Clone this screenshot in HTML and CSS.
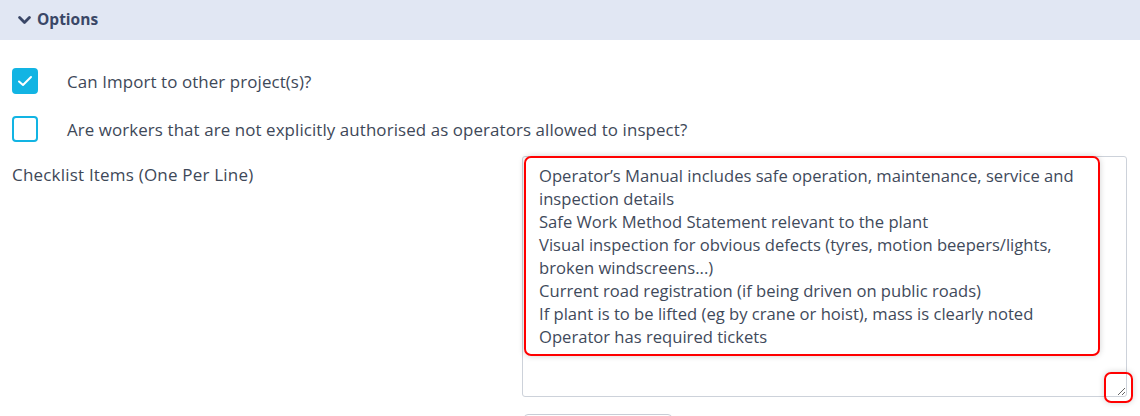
FILE: index.html
```html
<!DOCTYPE html>
<html lang="en">
<head>
    <meta charset="UTF-8">
    <title>Options</title>
    <link rel="stylesheet" href="styles.css">
</head>
<body>
    <div class="panel-header">
        <svg class="chevron" width="13" height="9" viewBox="0 0 13 9"><path d="M1.6 1.6 L6.5 6.5 L11.4 1.6" fill="none" stroke="#3a4767" stroke-width="2.8" stroke-linecap="round" stroke-linejoin="round"/></svg>
        <span>Options</span>
    </div>
    <div class="panel-body">
        <label class="check-row">
            <span class="box checked">
                <svg width="16" height="12" viewBox="0 0 16 12"><path d="M2 6.5 L6 10 L14 2" fill="none" stroke="#fff" stroke-width="2" stroke-linecap="round" stroke-linejoin="round"/></svg>
            </span>
            <span class="check-text">Can Import to other project(s)?</span>
        </label>
        <label class="check-row">
            <span class="box"></span>
            <span class="check-text">Are workers that are not explicitly authorised as operators allowed to inspect?</span>
        </label>
        <div class="field-row">
            <div class="field-label">Checklist Items (One Per Line)</div>
            <div class="field-input">
                <textarea class="checklist" rows="10">Operator’s Manual includes safe operation, maintenance, service and inspection details
Safe Work Method Statement relevant to the plant
Visual inspection for obvious defects (tyres, motion beepers/lights, broken windscreens...)
Current road registration (if being driven on public roads)
If plant is to be lifted (eg by crane or hoist), mass is clearly noted
Operator has required tickets</textarea>
                <div class="mark mark-text"></div>
                <div class="mark mark-handle"></div>
                <div class="next-btn"></div>
            </div>
        </div>
    </div>
</body>
</html>
```
FILE: styles.css
```css
html {
    overflow: hidden;
}
body {
    margin: 0;
    background: #fff;
    font-family: "Open Sans", sans-serif;
    color: #3e4858;
}
.panel-header {
    height: 40px;
    background: #e1e7f3;
    display: flex;
    align-items: center;
    padding-left: 18px;
    gap: 6px;
    color: #3a4767;
    font-weight: 700;
    font-size: 15.5px;
}
.panel-header span {
    margin-top: -2px;
}
.panel-body {
    padding: 28px 12px 0 12px;
}
.check-row {
    display: flex;
    align-items: center;
    height: 26px;
    margin-bottom: 22px;
}
.box {
    width: 26px;
    height: 26px;
    box-sizing: border-box;
    border: 2px solid #12b4e3;
    border-radius: 4px;
    display: flex;
    align-items: center;
    justify-content: center;
    flex-shrink: 0;
}
.box.checked {
    background: #12b4e3;
}
.check-text {
    margin-left: 29px;
    font-size: 16.9px;
    font-weight: 500;
    letter-spacing: 0.1px;
}
.field-row {
    display: flex;
    margin-top: -8px;
}
.field-label {
    width: 510px;
    flex-shrink: 0;
    font-size: 17px;
    font-weight: 500;
    letter-spacing: 0.2px;
    padding-top: 7px;
}
.field-input {
    position: relative;
    width: 605px;
}
.checklist {
    display: block;
    width: 605px;
    height: 241px;
    box-sizing: border-box;
    border: 1px solid #cdd2da;
    border-radius: 3px;
    padding: 7px 32px 0 16px;
    font-family: "Open Sans", sans-serif;
    font-size: 16.6px;
    line-height: 23px;
    color: #3f4a5b;
    resize: vertical;
    outline: none;
    overflow: hidden;
}
.mark {
    position: absolute;
    border: 2px solid #ff0000;
    border-radius: 7px;
    box-shadow: 0 0 6px rgba(0, 0, 0, 0.18);
}
.mark-text {
    left: 2px;
    top: 0;
    width: 572px;
    height: 196px;
}
.mark-handle {
    left: 582px;
    top: 216px;
    width: 25px;
    height: 27px;
}
.next-btn {
    margin-top: 17px;
    margin-left: 2px;
    width: 146px;
    height: 30px;
    border: 1px solid #c8cdd6;
    border-radius: 4px;
}
```
